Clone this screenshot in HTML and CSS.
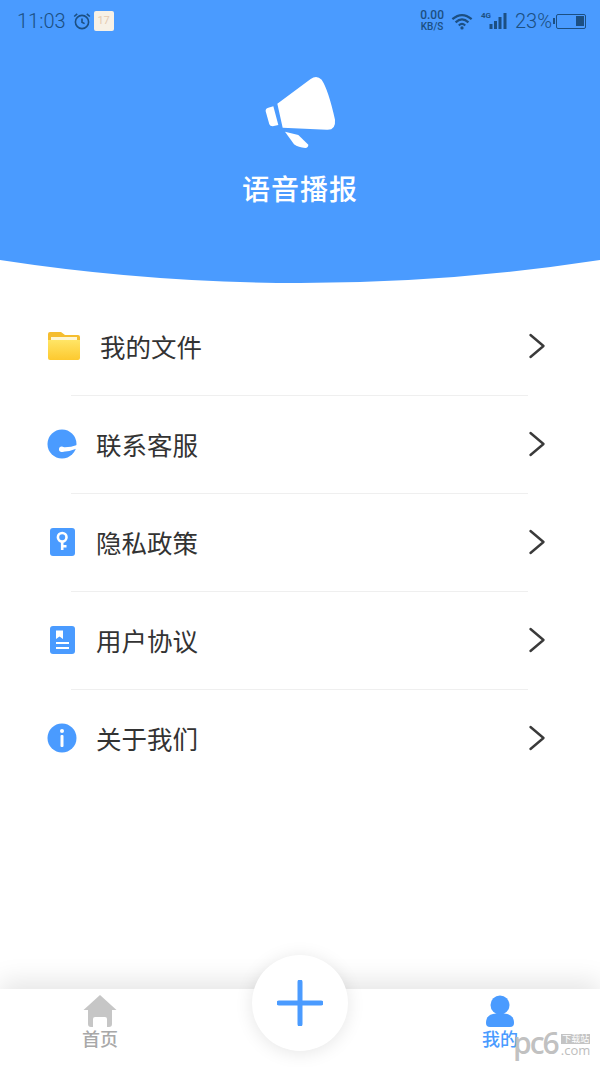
FILE: index.html
```html
<!DOCTYPE html>
<html lang="zh">
<head>
    <meta charset="UTF-8">
    <meta name="viewport" content="width=device-width, initial-scale=1.0">
    <link rel="stylesheet" href="styles.css">
    <title>语音播报</title>
</head>
<body>
    <div class="page">
        <div class="header">
            <div class="status">
                <div class="status-left">
                    <span class="time">11:03</span>
                    <svg class="alarm" width="18" height="18" viewBox="0 0 18 18">
                        <circle cx="9" cy="10" r="6.6" fill="none" stroke="#1c4f82" stroke-width="1.6"/>
                        <path d="M9 6.5V10.3L11.6 11.6M1.2 4.5L4.2 1.8M16.8 4.5L13.8 1.8" fill="none" stroke="#1c4f82" stroke-width="1.6"/>
                    </svg>
                    <span class="cal">17</span>
                </div>
                <div class="status-right">
                    <span class="speed">0.00<br><span class="speed-unit">KB/S</span></span>
                    <svg class="wifi" width="22" height="17" viewBox="0 0 24 18">
                        <path d="M1.500 6.500Q12 -2.500 22.500 6.500M5 10Q12 3.500 19 10M8.500 13.300Q12 10 15.500 13.300" fill="none" stroke="#1c4f82" stroke-width="2.400"/>
                        <circle cx="12" cy="16" r="1.800" fill="#1c4f82"/>
                    </svg>
                    <span class="net">4G</span>
                    <svg class="bars" width="18" height="16" viewBox="0 0 18 16">
                        <path d="M0.500 11h3v5h-3zM5 8h3v8h-3zM9.500 4h3v12h-3zM14.500 0h3v16h-3z" fill="#1c4f82"/>
                    </svg>
                    <span class="battery-text">23%</span>
                    <span class="battery"><span class="battery-fill"></span></span>
                </div>
            </div>
            <svg class="horn" width="80" height="80" viewBox="120 40 240 240">
                <path d="M172 132L272 58Q290 45 305 60Q325 90 345 180Q348 212 320 210L188 204Z" fill="#fff"/>
                <path d="M137 155Q136 146 145 144L160 140L175 196L158 200Q150 200 148 194Z" fill="#fff"/>
                <path d="M195 216L235 226L265 255Q265 264 256 265Q235 264 222 254Z" fill="#fff"/>
            </svg>
            <h1 class="title">语音播报</h1>
        </div>
        <svg class="curve" width="600" height="23" viewBox="0 0 600 23">
            <path d="M0 0H600Q300 46 0 0Z" fill="#4a9bff"/>
        </svg>

        <ul class="menu">
            <li class="row">
                <svg class="icon" width="34" height="30" viewBox="0 0 34 30">
                    <defs>
                        <linearGradient id="folderFill" x1="0" y1="0" x2="0" y2="1">
                            <stop offset="0" stop-color="#ffe566"/>
                            <stop offset="1" stop-color="#fdc92f"/>
                        </linearGradient>
                    </defs>
                    <path d="M1 3Q1 1 3 1H14L18 4H31Q33 4 33 6V12H1Z" fill="#f5bd2f"/>
                    <rect x="4" y="6" width="26" height="3" fill="#fff6d2"/>
                    <path d="M1 9H33V27Q33 29 31 29H3Q1 29 1 27Z" fill="url(#folderFill)"/>
                </svg>
                <span class="label first">我的文件</span>
                <svg class="arrow" width="18" height="26" viewBox="0 0 18 26"><path d="M2.500 2L15.500 13L2.500 24" fill="none" stroke="#3a3a3a" stroke-width="2.400" stroke-linecap="round" stroke-linejoin="round"/></svg>
            </li>
            <li class="row">
                <svg class="icon" width="30" height="30" viewBox="0 0 30 30">
                    <circle cx="15" cy="15" r="14.500" fill="#4a9bff"/>
                    <path d="M14 18Q22 19 30 16V19.500Q22 23 14 23Z" fill="#fff"/>
                    <circle cx="14.700" cy="20.300" r="2.700" fill="#fff"/>
                </svg>
                <span class="label">联系客服</span>
                <svg class="arrow" width="18" height="26" viewBox="0 0 18 26"><path d="M2.500 2L15.500 13L2.500 24" fill="none" stroke="#3a3a3a" stroke-width="2.400" stroke-linecap="round" stroke-linejoin="round"/></svg>
            </li>
            <li class="row">
                <svg class="icon" width="30" height="30" viewBox="0 0 30 30">
                    <rect x="3" y="1" width="25" height="28" rx="3" fill="#4a9bff"/>
                    <circle cx="15.200" cy="10.300" r="4.300" fill="none" stroke="#fff" stroke-width="2.600"/>
                    <path d="M15.200 14.600V23M15.200 19.300H19.500" fill="none" stroke="#fff" stroke-width="2.600"/>
                </svg>
                <span class="label">隐私政策</span>
                <svg class="arrow" width="18" height="26" viewBox="0 0 18 26"><path d="M2.500 2L15.500 13L2.500 24" fill="none" stroke="#3a3a3a" stroke-width="2.400" stroke-linecap="round" stroke-linejoin="round"/></svg>
            </li>
            <li class="row">
                <svg class="icon" width="30" height="30" viewBox="0 0 30 30">
                    <rect x="3" y="1" width="25" height="28" rx="3" fill="#4a9bff"/>
                    <path d="M9 5.500H16V14L12.500 11.500L9 14Z" fill="#fff"/>
                    <path d="M9 18H22M9 23H22" stroke="#fff" stroke-width="2"/>
                </svg>
                <span class="label">用户协议</span>
                <svg class="arrow" width="18" height="26" viewBox="0 0 18 26"><path d="M2.500 2L15.500 13L2.500 24" fill="none" stroke="#3a3a3a" stroke-width="2.400" stroke-linecap="round" stroke-linejoin="round"/></svg>
            </li>
            <li class="row">
                <svg class="icon" width="30" height="30" viewBox="0 0 30 30">
                    <circle cx="15" cy="15" r="14.500" fill="#4a9bff"/>
                    <circle cx="15" cy="8" r="2" fill="#fff"/>
                    <rect x="13.500" y="12" width="3" height="12" rx="1" fill="#fff"/>
                </svg>
                <span class="label">关于我们</span>
                <svg class="arrow" width="18" height="26" viewBox="0 0 18 26"><path d="M2.500 2L15.500 13L2.500 24" fill="none" stroke="#3a3a3a" stroke-width="2.400" stroke-linecap="round" stroke-linejoin="round"/></svg>
            </li>
        </ul>

        <div class="tabbar">
            <div class="tab">
                <svg width="34" height="33" viewBox="0 0 34 33">
                    <path d="M17 0L33.500 15H29V29Q29 32 26 32H24V24Q24 22 22 22H12Q10 22 10 24V32H8Q5 32 5 29V15H0.500Z" fill="#c6c6c6"/>
                </svg>
                <span class="tab-label">首页</span>
            </div>
            <div class="tab"></div>
            <div class="tab active">
                <svg width="30" height="33" viewBox="0 0 30 33">
                    <circle cx="15" cy="10" r="9.500" fill="#4a9bff"/>
                    <path d="M1 28Q1 19 11 18.500H19Q29 19 29 28Q29 32 25 32H5Q1 32 1 28Z" fill="#4a9bff"/>
                </svg>
                <span class="tab-label">我的</span>
            </div>
            <div class="fab">
                <svg width="46" height="46" viewBox="0 0 46 46">
                    <path d="M23 2V44M2 23H44" fill="none" stroke="#4a9bff" stroke-width="5" stroke-linecap="round"/>
                </svg>
            </div>
        </div>

        <div class="mark">
            <span class="mark-logo">pc6</span>
            <div class="mark-side">
                <span class="mark-tag">下载站</span>
                <span class="mark-com">.com</span>
            </div>
        </div>
    </div>
</body>
</html>
```
FILE: styles.css
```css
*{
    box-sizing: border-box;
}
body{
    margin: 0;
    background: #fff;
    font-family: "Noto Sans CJK SC", "Noto Sans", sans-serif;
}
.page{
    position: relative;
    width: 600px;
    height: 1067px;
    overflow: hidden;
    display: flex;
    flex-direction: column;
}
.header{
    height: 260px;
    background: #4a9bff;
    display: flex;
    flex-direction: column;
    align-items: center;
}
.curve{
    display: block;
    flex: none;
}
.status{
    width: 100%;
    height: 40px;
    padding: 2px 14px 0 17px;
    display: flex;
    justify-content: space-between;
    align-items: center;
    color: #1c4f82;
    font-family: Roboto, sans-serif;
}
.status-left,.status-right{
    display: flex;
    align-items: center;
}
.time{
    font-size: 20px;
    font-weight: 300;
    margin-right: 7px;
}
.cal{
    width: 20px;
    height: 20px;
    margin-left: 3px;
    border-radius: 2px;
    background: #f7f1e6;
    color: #e6cbb0;
    font-size: 11px;
    text-align: center;
    line-height: 20px;
}
.speed{
    font-size: 12px;
    font-weight: 500;
    line-height: 11px;
    text-align: center;
}
.speed-unit{
    font-size: 10px;
}
.wifi{
    margin-left: 7px;
}
.net{
    font-size: 8px;
    font-weight: 700;
    margin: 0 0 12px 8px;
}
.bars{
    margin-left: -2px;
}
.battery-text{
    font-size: 20px;
    font-weight: 300;
    margin-left: 8px;
}
.battery{
    position: relative;
    width: 30px;
    height: 15px;
    margin-left: 4px;
    border: 1.500px solid #1c4f82;
    border-radius: 2px;
    padding: 1.500px;
    display: flex;
    justify-content: flex-end;
}
.battery::before{
    content: "";
    position: absolute;
    left: -4px;
    top: 3px;
    width: 2px;
    height: 6px;
    background: #1c4f82;
}
.battery-fill{
    width: 8px;
    background: #1c4f82;
}
.horn{
    margin-top: 33px;
}
.title{
    margin: 15px 0 0;
    color: #fff;
    font-size: 28px;
    font-weight: 500;
    line-height: 40px;
    letter-spacing: 1px;
}
.menu{
    list-style: none;
    margin: 14px 0 0;
    padding: 0;
}
.row{
    position: relative;
    height: 98px;
    padding: 0 54px 0 47px;
    display: flex;
    align-items: center;
}
.row + .row::before{
    content: "";
    position: absolute;
    top: 0;
    left: 71px;
    width: 457px;
    height: 1px;
    background: #efefef;
}
.icon{
    flex: none;
}
.label{
    margin-left: 19px;
    font-size: 25.500px;
    line-height: 36px;
    color: #333;
    flex: 1;
}
.label.first{
    margin-left: 19px;
}
.arrow{
    flex: none;
}
.tabbar{
    position: relative;
    margin-top: auto;
    height: 78px;
    background: #fff;
    box-shadow: 0 -8px 24px rgba(0, 0, 0, 0.1);
    display: grid;
    grid-template-columns: repeat(3, 1fr);
}
.tab{
    padding-top: 6px;
    display: flex;
    flex-direction: column;
    align-items: center;
    color: #a8a8a8;
}
.tab-label{
    font-size: 18px;
    font-weight: 500;
    line-height: 24px;
    margin-top: -2px;
}
.tab.active{
    color: #4a9bff;
}
.fab{
    position: absolute;
    left: 252px;
    top: -34px;
    width: 96px;
    height: 96px;
    border-radius: 50%;
    background: #fff;
    box-shadow: 0 2px 18px rgba(0, 0, 0, 0.1);
    display: flex;
    align-items: center;
    justify-content: center;
}
.mark{
    position: absolute;
    left: 513px;
    top: 1028px;
    display: flex;
    align-items: flex-start;
    color: #bdbdbd;
    font-family: "Open Sans", sans-serif;
}
.mark-logo{
    font-size: 30px;
    font-weight: 600;
    line-height: 30px;
    letter-spacing: -2px;
    color: rgba(185, 185, 185, 0.9);
}
.mark-side{
    display: flex;
    flex-direction: column;
    align-items: flex-end;
    margin: 6px 0 0 3px;
}
.mark-tag{
    font-family: "Noto Sans CJK SC", sans-serif;
    font-size: 9px;
    line-height: 10px;
    padding: 0 1px;
    color: #fff;
    background: #c4c4c4;
    white-space: nowrap;
}
.mark-com{
    font-size: 13px;
    line-height: 13px;
}
```
